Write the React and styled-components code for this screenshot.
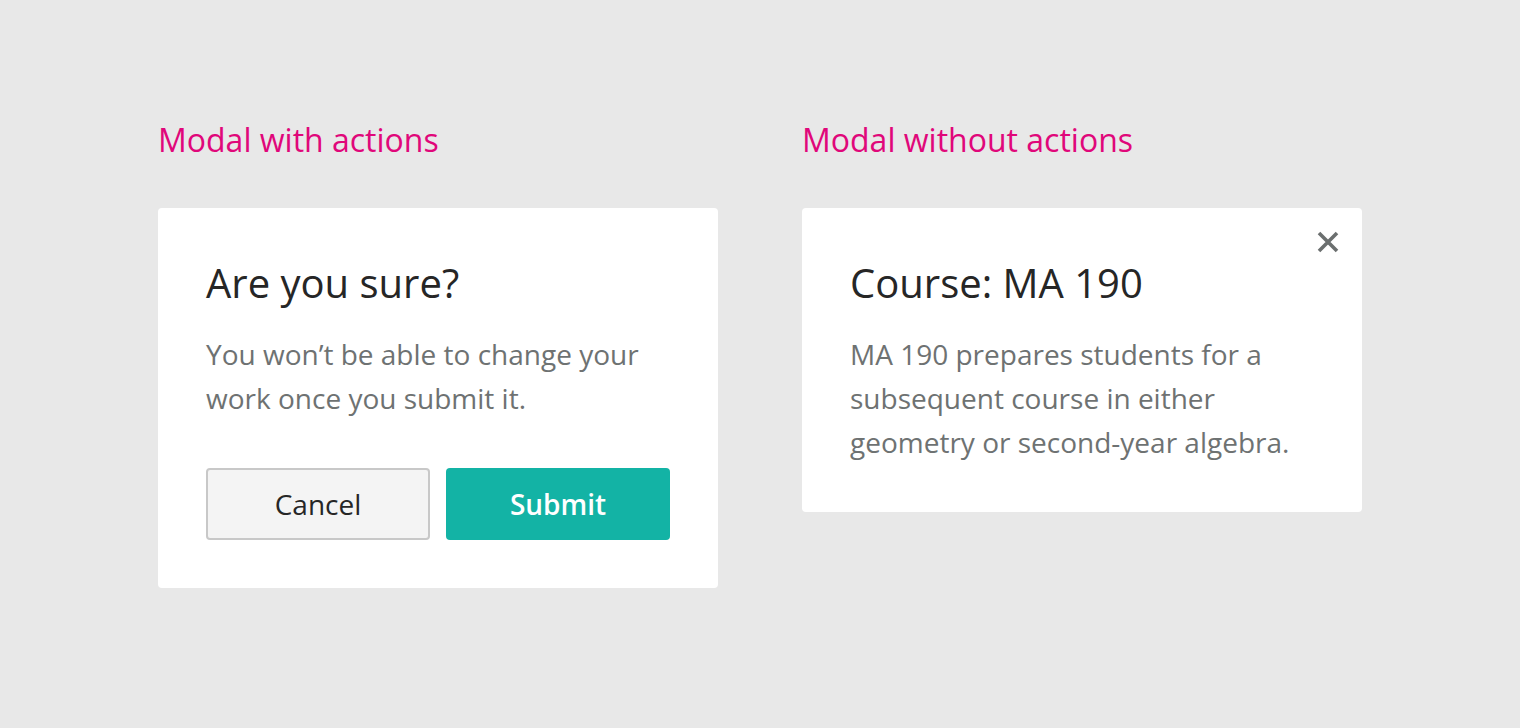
import React from "react";
import styled, { createGlobalStyle } from "styled-components";

const GlobalStyle = createGlobalStyle`
  html, body {
    margin: 0;
    padding: 0;
    background: #e8e8e8;
    font-family: "Open Sans", "Noto Sans", sans-serif;
  }
`;

const Page = styled.div`
  min-height: 728px;
  display: flex;
  justify-content: center;
  gap: 84px;
  padding-top: 118px;
  box-sizing: border-box;
`;

const Column = styled.section`
  width: 560px;
  display: flex;
  flex-direction: column;
`;

const SectionTitle = styled.h2`
  margin: 0 0 46px;
  font-size: 32px;
  line-height: 44px;
  font-weight: 400;
  color: #e0077a;
`;

const Card = styled.div`
  position: relative;
  background: #ffffff;
  border-radius: 4px;
  padding: 48px;
`;

const Title = styled.h3`
  margin: 0 0 22px;
  font-size: 40px;
  line-height: 54px;
  font-weight: 400;
  color: #262626;
`;

const Body = styled.p`
  margin: 0;
  font-size: 28px;
  line-height: 44px;
  color: #6e7272;
`;

const Actions = styled.div`
  display: flex;
  gap: 16px;
  margin-top: 48px;
`;

const Button = styled.button`
  width: 224px;
  height: 72px;
  box-sizing: border-box;
  border-radius: 4px;
  font-family: "Open Sans", "Noto Sans", sans-serif;
  font-size: 28px;
  font-weight: ${(p) => (p.$primary ? 600 : 400)};
  color: ${(p) => (p.$primary ? "#ffffff" : "#262626")};
  background: ${(p) => (p.$primary ? "#13b3a5" : "#f4f4f4")};
  border: ${(p) => (p.$primary ? "none" : "2px solid #c8c8c8")};
  cursor: pointer;
`;

const CloseButton = styled.button`
  position: absolute;
  top: 20px;
  right: 20px;
  width: 28px;
  height: 28px;
  padding: 0;
  border: none;
  background: transparent;
  display: flex;
  align-items: center;
  justify-content: center;
  cursor: pointer;
`;

export default function App() {
  return (
    <>
      <GlobalStyle />
      <Page>
        <Column>
          <SectionTitle>Modal with actions</SectionTitle>
          <Card>
            <Title>Are you sure?</Title>
            <Body>You won’t be able to change your work once you submit it.</Body>
            <Actions>
              <Button>Cancel</Button>
              <Button $primary>Submit</Button>
            </Actions>
          </Card>
        </Column>
        <Column>
          <SectionTitle>Modal without actions</SectionTitle>
          <Card>
            <CloseButton aria-label="Close">
              <svg width="22" height="22" viewBox="0 0 22 22">
                <path
                  d="M2 2 L20 20 M20 2 L2 20"
                  stroke="#6b6f6f"
                  strokeWidth="3.6"
                  fill="none"
                />
              </svg>
            </CloseButton>
            <Title>Course: MA 190</Title>
            <Body>
              MA 190 prepares students for a subsequent course in either geometry or second-year algebra.
            </Body>
          </Card>
        </Column>
      </Page>
    </>
  );
}
